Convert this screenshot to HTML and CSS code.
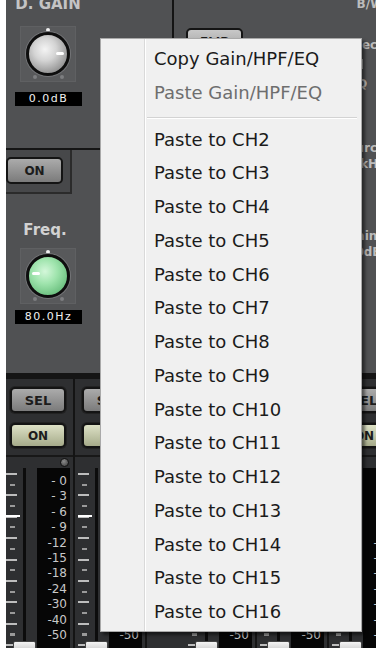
FILE: index.html
```html
<!DOCTYPE html>
<html lang="en">
<head>
    <meta charset="UTF-8">
    <meta name="viewport" content="width=device-width, initial-scale=1.0">
    <title>Channel Edit - Gain/HPF/EQ</title>
    <link rel="stylesheet" href="styles.css">
</head>
<body>
    <div class="mixer">
        <!-- input section -->
        <div class="upper">
            <div class="gain-col">
                <div class="sec-title">D. GAIN</div>
                <div class="knob-box"><div class="knob grey"></div></div>
                <div class="readout">0.0dB</div>
                <div class="rule"></div>
                <div class="on-frame"><div class="btn">ON</div></div>
                <div class="sec-label">Freq.</div>
                <div class="knob-box freq-box"><div class="knob green"></div></div>
                <div class="readout">80.0Hz</div>
            </div>
            <div class="mid-col">
                <div class="btn light">FLIP</div>
            </div>
            <div class="side-col">
                <div class="side-lbl lbl-bw">B/W</div>
                <div class="side-lbl lbl-sel">Select</div>
                <div class="side-bar"></div>
                <div class="side-lbl lbl-q">Q</div>
                <div class="side-lbl lbl-src">Source</div>
                <div class="side-lbl">1.0kHz</div>
                <div class="side-lbl lbl-gain">Gain</div>
                <div class="side-lbl">0.0dB</div>
            </div>
        </div>

        <!-- channel strips -->
        <div class="lower">
            <div class="strip">
                <div class="btn sel">SEL</div>
                <div class="btn on-g">ON</div>
                <div class="strip-rule"></div>
                <div class="led-row"><div class="led"></div></div>
                <div class="meter">
                    <div class="ticks"></div>
                    <div class="slot"></div>
                    <div class="scale">
                        <div>- 0</div><div>- 3</div><div>- 6</div><div>- 9</div><div>-12</div><div>-15</div>
                        <div>-18</div><div>-24</div><div>-30</div><div>-40</div><div>-50</div>
                    </div>
                    <div class="cap"></div>
                </div>
            </div>
            <div class="strip">
                <div class="btn sel">SEL</div>
                <div class="btn on-g">ON</div>
                <div class="strip-rule"></div>
                <div class="led-row"><div class="led"></div></div>
                <div class="meter">
                    <div class="ticks"></div>
                    <div class="slot"></div>
                    <div class="scale">
                        <div>- 0</div><div>- 3</div><div>- 6</div><div>- 9</div><div>-12</div><div>-15</div>
                        <div>-18</div><div>-24</div><div>-30</div><div>-40</div><div>-50</div>
                    </div>
                    <div class="cap"></div>
                </div>
            </div>
            <div class="strip-gap"></div>
            <div class="strip">
                <div class="btn sel">SEL</div>
                <div class="btn on-g">ON</div>
                <div class="strip-rule"></div>
                <div class="led-row"><div class="led"></div></div>
                <div class="meter">
                    <div class="ticks"></div>
                    <div class="slot"></div>
                    <div class="scale">
                        <div>- 0</div><div>- 3</div><div>- 6</div><div>- 9</div><div>-12</div><div>-15</div>
                        <div>-18</div><div>-24</div><div>-30</div><div>-40</div><div>-50</div>
                    </div>
                    <div class="cap"></div>
                </div>
            </div>
            <div class="strip">
                <div class="btn sel">SEL</div>
                <div class="btn on-g">ON</div>
                <div class="strip-rule"></div>
                <div class="led-row"><div class="led"></div></div>
                <div class="meter">
                    <div class="ticks"></div>
                    <div class="slot"></div>
                    <div class="scale">
                        <div>- 0</div><div>- 3</div><div>- 6</div><div>- 9</div><div>-12</div><div>-15</div>
                        <div>-18</div><div>-24</div><div>-30</div><div>-40</div><div>-50</div>
                    </div>
                    <div class="cap"></div>
                </div>
            </div>
            <div class="strip">
                <div class="btn sel">SEL</div>
                <div class="btn on-g">ON</div>
                <div class="strip-rule"></div>
                <div class="led-row"><div class="led"></div></div>
                <div class="meter">
                    <div class="ticks"></div>
                    <div class="slot"></div>
                    <div class="scale">
                        <div>- 0</div><div>- 3</div><div>- 6</div><div>- 9</div><div>-12</div><div>-15</div>
                        <div>-18</div><div>-24</div><div>-30</div><div>-40</div><div>-50</div>
                    </div>
                    <div class="cap"></div>
                </div>
            </div>
        </div>
    </div>

    <!-- context menu -->
    <div class="menu">
        <div class="item">Copy Gain/HPF/EQ</div>
        <div class="item disabled">Paste Gain/HPF/EQ</div>
        <div class="sep"></div>
        <div class="item">Paste to CH2</div>
        <div class="item">Paste to CH3</div>
        <div class="item">Paste to CH4</div>
        <div class="item">Paste to CH5</div>
        <div class="item">Paste to CH6</div>
        <div class="item">Paste to CH7</div>
        <div class="item">Paste to CH8</div>
        <div class="item">Paste to CH9</div>
        <div class="item">Paste to CH10</div>
        <div class="item">Paste to CH11</div>
        <div class="item">Paste to CH12</div>
        <div class="item">Paste to CH13</div>
        <div class="item">Paste to CH14</div>
        <div class="item">Paste to CH15</div>
        <div class="item">Paste to CH16</div>
    </div>
</body>
</html>
```

FILE: styles.css
```css
body {
    margin: 0;
    width: 376px;
    height: 648px;
    overflow: hidden;
    position: relative;
    background: #fff;
    font-family: "DejaVu Sans", sans-serif;
}
.mixer {
    margin-left: 6px;
    width: 370px;
    height: 648px;
    overflow: hidden;
    background: #505153;
    display: flex;
    flex-direction: column;
}

/* upper section */
.upper {
    height: 373px;
    flex-shrink: 0;
    display: flex;
}
.gain-col {
    width: 166px;
    flex-shrink: 0;
    border-right: 2px solid #141414;
    display: flex;
    flex-direction: column;
}
.sec-title {
    width: 84px;
    margin-top: -3px;
    height: 14px;
    line-height: 14px;
    text-align: center;
    font-weight: bold;
    font-size: 15px;
    color: #c4c4c4;
}
.knob-box {
    width: 56px;
    height: 56px;
    margin: 15px 0 0 14px;
    background: #58595b;
    box-shadow: inset 0 0 0 1px #5f6062;
    display: flex;
    align-items: center;
    justify-content: center;
    position: relative;
}
.knob-box::before {
    content: "";
    position: absolute;
    left: 26px;
    top: 2px;
    width: 4px;
    height: 4px;
    border-radius: 50%;
    background: #f0f0f0;
    box-shadow: -13px 47px 0 0 #7d7e80, 14px 47px 0 0 #7d7e80;
}
.freq-box {
    margin-top: 9px;
}
.knob {
    width: 38px;
    height: 38px;
    border-radius: 50%;
    border: 3px solid #0e0e0e;
    box-shadow: 0 0 0 1px #747578;
    position: relative;
}
.knob.grey {
    background: radial-gradient(circle at 42% 38%, #f4f4f4 0%, #d4d4d4 35%, #9c9c9c 70%, #6c6c6c 100%);
}
.knob.green {
    background: radial-gradient(circle at 42% 38%, #d4f7da 0%, #9fe4ad 38%, #72c585 72%, #4d9a5e 100%);
}
.knob::after {
    content: "";
    position: absolute;
    top: 17px;
    width: 8px;
    height: 3px;
    border-radius: 2px;
    background: #fff;
}
.knob.grey::after {
    right: 3px;
}
.knob.green::after {
    left: 3px;
    top: 15px;
}
.readout {
    width: 67px;
    height: 14px;
    margin: 10px 0 0 9px;
    background: #000;
    color: #f0f0f0;
    font-size: 11px;
    letter-spacing: 1.5px;
    line-height: 14px;
    text-align: center;
}
.freq-box + .readout {
    margin-top: 6px;
}
.rule {
    margin-top: 42px;
    height: 2px;
    background: #151515;
}
.on-frame {
    width: 64px;
    height: 42px;
    background: #47484a;
    border-right: 2px solid #2b2b2b;
    border-bottom: 2px solid #2b2b2b;
}
.btn {
    box-sizing: border-box;
    width: 57px;
    height: 27px;
    border: 2px solid #141414;
    border-radius: 5px;
    background: linear-gradient(#ababab, #7b7b7b);
    color: #1c1c1c;
    font-weight: bold;
    font-size: 12px;
    display: flex;
    align-items: center;
    justify-content: center;
}
.on-frame .btn {
    margin-top: 7px;
}
.sec-label {
    width: 78px;
    margin-top: 27px;
    line-height: 18px;
    text-align: center;
    font-weight: bold;
    font-size: 15px;
    color: #d2d2d2;
}
.mid-col {
    width: 158px;
    flex-shrink: 0;
}
.btn.light {
    margin: 28px 0 0 12px;
    background: linear-gradient(#c8c8c8, #9c9c9c);
}
.side-col {
    width: 60px;
    flex-shrink: 0;
    text-align: center;
    font-weight: bold;
    font-size: 12px;
    line-height: 16px;
    color: #bcbcbc;
}
.side-lbl {
    white-space: nowrap;
}
.lbl-bw {
    margin-top: -4px;
    padding-left: 16px;
}
.lbl-sel { margin-top: 25px; }
.side-bar {
    width: 2px;
    height: 10px;
    margin: 6px auto 0;
    background: #bcbcbc;
}
.lbl-q { margin-top: 7px; }
.lbl-src { margin-top: 48px; }
.lbl-gain { margin-top: 56px; }

/* channel strips */
.lower {
    flex: 1;
    display: flex;
    margin-left: -3px;
    background: #2e2f31;
    border-top: 6px solid #151515;
}
.strip {
    width: 70px;
    flex-shrink: 0;
    border-right: 2px solid #141414;
    display: flex;
    flex-direction: column;
}
.strip-gap {
    width: 38px;
    flex-shrink: 0;
}
.strip .btn {
    margin: 8px 0 0 7px;
    width: 56px;
    height: 26px;
    font-size: 13px;
    box-shadow: 0 0 0 1px #222;
}
.strip .btn.on-g {
    margin-top: 10px;
    height: 25px;
    font-size: 12px;
    background: linear-gradient(#dde1c6, #a6ab8a);
}
.strip-rule {
    margin-top: 7px;
    height: 2px;
    background: #181818;
}
.led-row {
    height: 11px;
    padding-left: 57px;
}
.led {
    width: 7px;
    height: 7px;
    margin-top: 1px;
    border-radius: 50%;
    border: 1px solid #111;
    background: radial-gradient(circle at 40% 35%, #8a8a8a, #3a3a3a);
}
.meter {
    flex: 1;
    display: flex;
    padding-left: 3px;
    position: relative;
}
.ticks {
    width: 17px;
    background:
        linear-gradient(#fff, #fff) 0 47px / 14px 2px no-repeat,
        repeating-linear-gradient(to bottom, transparent 0 5px, #bdbdbd 5px 7px, transparent 7px 21.4px) 0 0 / 11px 100% no-repeat,
        repeating-linear-gradient(to bottom, transparent 0 15.7px, #9a9a9a 15.7px 17.7px, transparent 17.7px 21.4px) 4px 0 / 5px 100% no-repeat;
}
.slot {
    width: 3px;
    margin-right: 11px;
    background: #0c0c0c;
}
.scale {
    width: 33px;
    box-sizing: border-box;
    padding: 6px 3px 0 0;
    background: #060606;
    text-align: right;
    font-size: 12px;
    line-height: 15.4px;
    color: #c8c8c8;
}
.scale div {
    white-space: pre;
}
.cap {
    position: absolute;
    left: 10px;
    top: 173px;
    width: 21px;
    height: 12px;
    border: 1px solid #444;
    border-radius: 2px;
    background: linear-gradient(#f4f4f4, #bdbdbd);
}

/* context menu */
.menu {
    position: absolute;
    left: 100px;
    top: 38px;
    width: 262px;
    height: 594px;
    box-sizing: border-box;
    padding: 3px 2px 2px;
    border: 1px solid #a9a9a9;
    background:
        linear-gradient(to right, transparent 43px, #d9d9d9 43px 44px, #fff 44px 45px, transparent 45px) no-repeat,
        #f0f0f0;
    box-shadow: 3px 3px 3px rgba(0, 0, 0, 0.5);
    font-size: 18px;
    color: #1b1b1b;
}
.item {
    height: 33.75px;
    line-height: 33.75px;
    padding-left: 51px;
    white-space: nowrap;
}
.item.disabled {
    color: #6e6e6e;
}
.sep {
    height: 13px;
    margin: 0 2px 0 44px;
    background: linear-gradient(transparent 7px, #d3d3d3 7px 8px, #fff 8px 9px, transparent 9px);
}
```
